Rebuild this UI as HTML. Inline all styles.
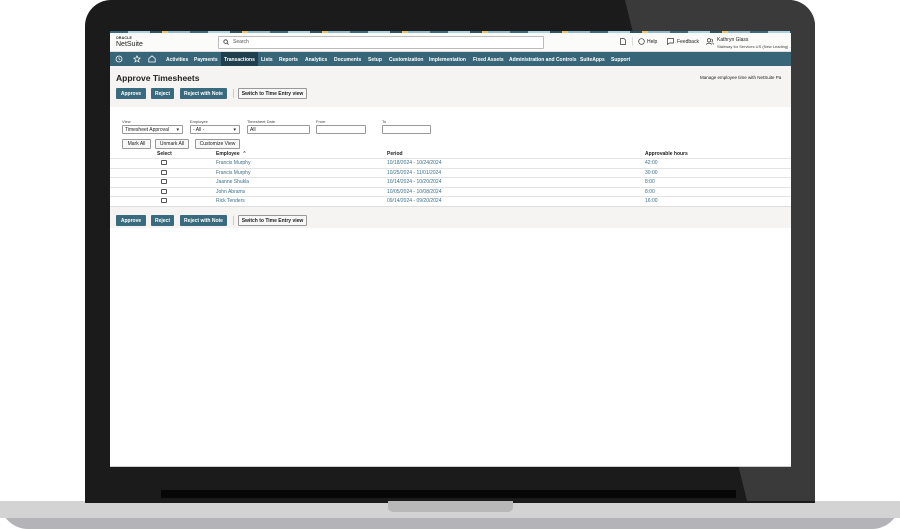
<!DOCTYPE html>
<html><head><meta charset="utf-8"><style>
*{margin:0;padding:0;box-sizing:border-box}
body{width:900px;height:529px;background:#fff;position:relative;overflow:hidden;font-family:"Liberation Sans",sans-serif;color:#222}
.a{position:absolute}
.t{position:absolute;font-size:5px;white-space:nowrap;line-height:1}
.btn,.wbtn{position:absolute;height:11px;font-size:5px;display:flex;align-items:center;justify-content:center;white-space:nowrap;border-radius:1px}
.btn{background:#3a6a7d;color:#fff;font-weight:bold}
.wbtn{background:#f7f7f7;border:1px solid #999;color:#222;font-weight:bold}
.fld{position:absolute;height:9px;background:#fff;border:1px solid #999;font-size:5px;display:flex;align-items:center;padding-left:2px;border-radius:1px}
.lnk{color:#3b6f8c}
.nav span{position:absolute;top:4.5px;font-size:5px;color:#fff;font-weight:bold}
.row{position:absolute;left:110px;width:681px;height:1px;background:#e4e4e4}
.cb{position:absolute;width:6px;height:5px;border:1px solid #555;border-radius:1px;background:#fff}
</style></head><body>
<div class="a" style="left:0;top:501px;width:900px;height:28px;background:#b4b4b8;border-radius:0 0 28px 28px"></div>
<div class="a" style="left:0;top:501px;width:900px;height:17px;background:#d3d3d3"></div>
<div class="a" style="left:85px;top:0;width:730px;height:503px;background:#1b1b1b;border-radius:26px 26px 0 0"></div>
<div class="a" style="left:85px;top:0;width:730px;height:501px;background:#3a3a3a;border-radius:26px 26px 0 0;clip-path:polygon(540px 0,730px 0,730px 501px,662px 501px)"></div>
<div class="a" style="left:161px;top:490px;width:575px;height:8px;background:#070707"></div>
<div class="a" style="left:388px;top:501px;width:125px;height:11px;background:#b8b8b8;border-radius:0 0 5px 5px"></div>
<div class="a" style="left:110px;top:31px;width:681px;height:436px;background:#fff;overflow:hidden"></div>
<div class="a" style="left:110px;top:31px;width:681px;height:2px;background:repeating-linear-gradient(90deg,#3d6a7d 0 18px,#a9d0de 18px 40px,#2f5566 40px 52px,#e7c36a 52px 58px,#8fb8c8 58px 80px)"></div>
<div class="a" style="left:110px;top:33px;width:681px;height:19px;background:#fbfbfa;border-bottom:1px solid #ddd"></div>
<div class="t" style="left:116px;top:37px;font-size:3.5px;font-weight:bold;letter-spacing:.2px">ORACLE</div>
<div class="t" style="left:116px;top:41px;font-size:7px">NetSuite</div>
<div class="a" style="left:218px;top:36px;width:326px;height:13px;border:1px solid #bbb;background:#fff;border-radius:1px"></div>
<svg class="a" style="left:223px;top:39px" width="6" height="6"><circle cx="2.6" cy="2.6" r="1.8" fill="none" stroke="#333" stroke-width=".8"/><path d="M4 4l1.6 1.6" stroke="#333" stroke-width=".8"/></svg>
<div class="t" style="left:233px;top:40px;color:#555">Search</div>
<svg class="a" style="left:620px;top:38px" width="6" height="7"><path d="M.5.5h3.5l1.5 1.5v4.5h-5z" fill="none" stroke="#333" stroke-width=".7"/></svg>
<div class="a" style="left:632px;top:37px;width:1px;height:9px;background:#ddd"></div>
<svg class="a" style="left:638px;top:38px" width="7" height="7"><circle cx="3.5" cy="3.5" r="2.8" fill="none" stroke="#333" stroke-width=".7"/></svg>
<div class="t" style="left:647px;top:40px">Help</div>
<svg class="a" style="left:667px;top:38px" width="7" height="7"><path d="M.5.5h6v4.5h-4l-2 1.5z" fill="none" stroke="#333" stroke-width=".7"/></svg>
<div class="t" style="left:677px;top:40px">Feedback</div>
<svg class="a" style="left:706px;top:38px" width="8" height="7"><circle cx="3" cy="2.3" r="1.7" fill="none" stroke="#333" stroke-width=".7"/><path d="M.4 6.6c.5-2 4.7-2 5.2 0M5.5 1a1.6 1.6 0 010 3M7.6 6.4c-.2-1-.8-1.5-1.5-1.7" fill="none" stroke="#333" stroke-width=".7"/></svg>
<div class="t" style="left:717px;top:38px">Kathryn Glass</div>
<div class="t" style="left:717px;top:45px;font-size:4px;color:#444">Stairway for Services US (New Leading) ...</div>
<div class="a nav" style="left:110px;top:52px;width:681px;height:14px;background:#386577">
<div class="a" style="left:111px;top:0;width:37px;height:14px;background:#1f3f4e"></div>
<svg class="a" style="left:5px;top:3px" width="8" height="8"><circle cx="4" cy="4" r="3" fill="none" stroke="#fff" stroke-width=".8"/><path d="M4 2.3V4l1.3 1" fill="none" stroke="#fff" stroke-width=".7"/></svg>
<svg class="a" style="left:23px;top:3px" width="8" height="8"><path d="M4 .8l.95 2.1 2.3.2-1.75 1.5.55 2.3L4 5.7 1.95 6.9l.55-2.3L.75 3.1l2.3-.2z" fill="none" stroke="#fff" stroke-width=".7"/></svg>
<svg class="a" style="left:38px;top:3px" width="8" height="8"><path d="M.8 7V3.5L4 .8l3.2 2.7V7z" fill="none" stroke="#fff" stroke-width=".8"/></svg>
<span style="left:56px">Activities</span><span style="left:84px">Payments</span><span style="left:114px">Transactions</span><span style="left:151px">Lists</span><span style="left:169px">Reports</span><span style="left:195px">Analytics</span><span style="left:224px">Documents</span><span style="left:258px">Setup</span><span style="left:279px">Customization</span><span style="left:319px">Implementation</span><span style="left:363px">Fixed Assets</span><span style="left:399px">Administration and Controls</span><span style="left:470px">SuiteApps</span><span style="left:501px">Support</span>
</div>
<div class="a" style="left:110px;top:66px;width:681px;height:162px;background:#f5f4f2"></div>
<div class="t" style="left:116px;top:74px;font-size:8.5px;font-weight:bold">Approve Timesheets</div>
<div class="t" style="left:700px;top:76px;font-size:4.5px">Manage employee time with NetSuite Pa</div>
<div class="btn" style="left:116px;top:88px;width:30px">Approve</div>
<div class="btn" style="left:151px;top:88px;width:23px">Reject</div>
<div class="btn" style="left:180px;top:88px;width:47px">Reject with Note</div>
<div class="a" style="left:233px;top:89px;width:1px;height:9px;background:#ccc"></div>
<div class="wbtn" style="left:238px;top:88px;width:69px">Switch to Time Entry view</div>
<div class="a" style="left:110px;top:107px;width:681px;height:100px;background:#fff;border-bottom:1px solid #ddd"></div>
<div class="t" style="left:122px;top:120px;font-size:4px;color:#444">View</div>
<div class="t" style="left:190px;top:120px;font-size:4px;color:#444">Employee</div>
<div class="t" style="left:247px;top:120px;font-size:4px;color:#444">Timesheet Date</div>
<div class="t" style="left:316px;top:120px;font-size:4px;color:#444">From</div>
<div class="t" style="left:382px;top:120px;font-size:4px;color:#444">To</div>
<div class="fld" style="left:122px;top:125px;width:61px">Timesheet Approval<span style="position:absolute;right:3px">▾</span></div>
<div class="fld" style="left:190px;top:125px;width:50px">- All -<span style="position:absolute;right:3px">▾</span></div>
<div class="fld" style="left:247px;top:125px;width:63px">All</div>
<div class="fld" style="left:316px;top:125px;width:50px"></div>
<div class="fld" style="left:382px;top:125px;width:49px"></div>
<div class="wbtn" style="left:122px;top:139px;width:29px;height:10px;font-weight:normal">Mark All</div>
<div class="wbtn" style="left:155px;top:139px;width:34px;height:10px;font-weight:normal">Unmark All</div>
<div class="wbtn" style="left:195px;top:139px;width:45px;height:10px;font-weight:normal">Customize View</div>
<div class="t" style="left:157px;top:152px;font-weight:bold">Select</div>
<div class="t" style="left:216px;top:152px;font-weight:bold">Employee &nbsp;⌃</div>
<div class="t" style="left:387px;top:152px;font-weight:bold">Period</div>
<div class="t" style="left:645px;top:152px;font-weight:bold">Approvable hours</div>
<div class="row" style="top:158px"></div><div class="row" style="top:168px"></div><div class="row" style="top:177px"></div><div class="row" style="top:187px"></div><div class="row" style="top:196px"></div>
<div class="cb" style="left:161px;top:160px"></div><div class="cb" style="left:161px;top:170px"></div><div class="cb" style="left:161px;top:179px"></div><div class="cb" style="left:161px;top:189px"></div><div class="cb" style="left:161px;top:198px"></div>
<div class="t lnk" style="left:216px;top:161px">Francis Murphy</div><div class="t lnk" style="left:387px;top:161px">10/18/2024 - 10/24/2024</div><div class="t lnk" style="left:645px;top:161px">42:00</div>
<div class="t lnk" style="left:216px;top:171px">Francis Murphy</div><div class="t lnk" style="left:387px;top:171px">10/25/2024 - 11/01/2024</div><div class="t lnk" style="left:645px;top:171px">30:00</div>
<div class="t lnk" style="left:216px;top:180px">Jaanne Shukla</div><div class="t lnk" style="left:387px;top:180px">10/14/2024 - 10/20/2024</div><div class="t lnk" style="left:645px;top:180px">8:00</div>
<div class="t lnk" style="left:216px;top:190px">John Abrams</div><div class="t lnk" style="left:387px;top:190px">10/05/2024 - 10/08/2024</div><div class="t lnk" style="left:645px;top:190px">8:00</div>
<div class="t lnk" style="left:216px;top:199px">Rick Tenders</div><div class="t lnk" style="left:387px;top:199px">09/14/2024 - 09/20/2024</div><div class="t lnk" style="left:645px;top:199px">16:00</div>
<div class="btn" style="left:116px;top:215px;width:30px">Approve</div>
<div class="btn" style="left:151px;top:215px;width:23px">Reject</div>
<div class="btn" style="left:180px;top:215px;width:47px">Reject with Note</div>
<div class="a" style="left:233px;top:216px;width:1px;height:9px;background:#ccc"></div>
<div class="wbtn" style="left:238px;top:215px;width:69px">Switch to Time Entry view</div>
<div class="a" style="left:110px;top:466px;width:681px;height:1px;background:#ccc"></div>
</body></html>
